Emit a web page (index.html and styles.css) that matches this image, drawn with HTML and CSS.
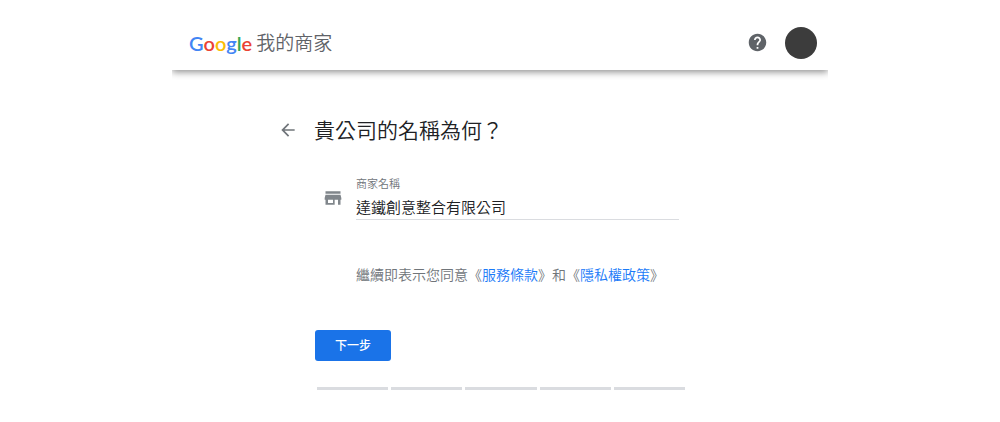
FILE: index.html
```html
<!DOCTYPE html>
<html lang="zh-Hant">
<head>
    <meta charset="UTF-8">
    <meta name="viewport" content="width=device-width, initial-scale=1.0">
    <title>Google 我的商家</title>
    <link rel="stylesheet" href="styles.css">
</head>
<body>
    <div class="page">
        <header class="header">
            <a class="brand" href="#">
                <span class="logo"><span class="blue">G</span><span class="red">o</span><span class="yellow">o</span><span class="blue">g</span><span class="green">l</span><span class="red">e</span></span>
                <span class="product">我的商家</span>
            </a>
            <div class="actions">
                <button type="button" class="icon-button" aria-label="說明">
                    <svg width="21" height="21" viewBox="0 0 24 24" fill="currentColor"><path d="M12 2C6.48 2 2 6.48 2 12s4.48 10 10 10 10-4.48 10-10S17.52 2 12 2zm1 17h-2v-2h2v2zm2.07-7.75l-.9.92C13.45 12.9 13 13.5 13 15h-2v-.5c0-1.1.45-2.1 1.17-2.83l1.24-1.26c.37-.36.59-.86.59-1.41 0-1.1-.9-2-2-2s-2 .9-2 2H8c0-2.21 1.79-4 4-4s4 1.79 4 4c0 .88-.36 1.68-.93 2.25z"/></svg>
                </button>
                <button type="button" class="avatar" aria-label="帳戶"></button>
            </div>
        </header>

        <main class="content">
            <div class="title-row">
                <button type="button" class="icon-button back" aria-label="返回">
                    <svg width="20" height="20" viewBox="0 0 24 24" fill="currentColor"><path d="M20 11H7.83l5.59-5.59L12 4l-8 8 8 8 1.41-1.41L7.83 13H20v-2z"/></svg>
                </button>
                <h1>貴公司的名稱為何？</h1>
            </div>

            <form class="form">
                <div class="field-row">
                    <svg class="store-icon" width="20" height="20" viewBox="0 0 24 24" fill="currentColor"><path d="M21 4H3v3h18V4zm1 10v-2l-1-4H3l-1 4v2h1v6h11v-6h4v6h3v-6h1zm-10 4H6v-4h6v4z"/></svg>
                    <div class="field">
                        <label for="businessName">商家名稱</label>
                        <input type="text" id="businessName" name="businessName" value="達鐵創意整合有限公司">
                    </div>
                </div>

                <p class="terms">繼續即表示您同意《<a href="#">服務條款</a>》和《<a href="#">隱私權政策</a>》</p>

                <button type="submit" class="next">下一步</button>
            </form>

            <div class="steps">
                <span></span>
                <span></span>
                <span></span>
                <span></span>
                <span></span>
            </div>
        </main>
    </div>
</body>
</html>
```
FILE: styles.css
```css
* {
    box-sizing: border-box;
}
body {
    margin: 0;
    background-color: #fff;
    color: #202124;
    font-family: "Noto Sans CJK TC", sans-serif;
    font-weight: 350;
}
button, input {
    font-family: inherit;
    font-weight: inherit;
}
button {
    border: none;
    cursor: pointer;
}
a {
    color: #1a73e8;
    text-decoration: none;
}
.page {
    max-width: 656px;
    margin: 0 auto;
    overflow: hidden;
    padding-bottom: 32px;
}
.header {
    display: flex;
    justify-content: space-between;
    align-items: center;
    height: 70px;
    padding: 15px 11px 0 17px;
    box-shadow: 0 2px 7px rgba(0, 0, 0, 0.45);
}
.brand {
    display: flex;
    align-items: center;
    gap: 4px;
    line-height: 24px;
}
.logo {
    font-family: Lato, sans-serif;
    font-size: 20px;
    font-weight: 600;
}
.product {
    padding-bottom: 1px;
    color: #5f6368;
    font-size: 19px;
}
.blue {
    color: #4285f4;
}
.red {
    color: #ea4335;
}
.yellow {
    color: #fbbc05;
}
.green {
    color: #34a853;
}
.actions {
    display: flex;
    align-items: center;
    gap: 17px;
}
.icon-button {
    display: flex;
    padding: 0;
    background: none;
    color: #5f6368;
}
.avatar {
    width: 32px;
    height: 32px;
    border-radius: 50%;
    background-color: #3c3c3c;
}
.content {
    max-width: 444px;
    margin: 0 auto;
    padding: 44px 0 0;
}
.title-row {
    display: flex;
    align-items: center;
    gap: 16px;
}
.back {
    color: #70757a;
}
h1 {
    margin: 0;
    padding-bottom: 2px;
    font-size: 21px;
    font-weight: 350;
    line-height: 30px;
}
.form {
    padding-left: 37px;
}
.field-row {
    display: flex;
    align-items: center;
    gap: 13px;
    margin-top: 29px;
    padding: 0 43px 0 8px;
}
.store-icon {
    color: #80868b;
}
.field {
    flex: 1;
}
label {
    display: block;
    color: #70757a;
    font-size: 11px;
    line-height: 16px;
}
input {
    display: block;
    width: 100%;
    height: 29px;
    padding: 2px 0 0;
    border: none;
    border-bottom: 1px solid #dadce0;
    outline: none;
    background: none;
    color: #202124;
    font-size: 15px;
}
.terms {
    margin: 42px 0 0;
    padding-left: 41px;
    color: #70757a;
    font-size: 14px;
    line-height: 24px;
}
.terms a {
    color: #1a7af8;
}
.next {
    display: block;
    width: 76px;
    height: 31px;
    margin-top: 44px;
    padding: 0 0 3px;
    border-radius: 3px;
    background-color: #1a73e8;
    color: #fff;
    font-size: 12px;
    font-weight: 500;
}
.steps {
    display: flex;
    gap: 3px;
    margin-top: 26px;
    padding: 0 37px 0 39px;
}
.steps span {
    flex: 1;
    height: 3px;
    background-color: #dadce0;
}
```
